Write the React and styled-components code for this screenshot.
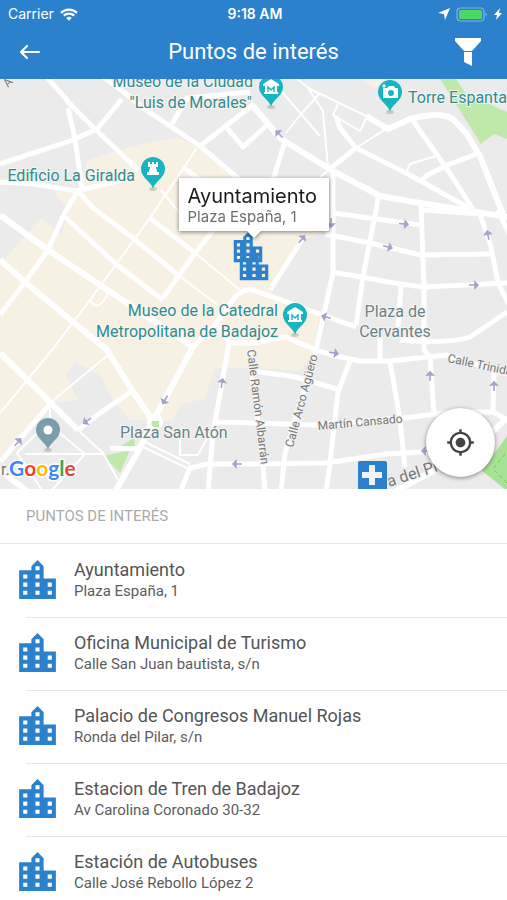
import React from 'react';
import styled, { createGlobalStyle } from 'styled-components';
import { MdLocationCity, MdMyLocation } from 'react-icons/md';

const BLUE = '#2b81cb';

const GlobalStyle = createGlobalStyle`
  * {
    box-sizing: border-box;
  }
  body {
    margin: 0;
    background: #ffffff;
    font-family: Roboto, 'Liberation Sans', sans-serif;
  }
`;

const Screen = styled.div`
  display: flex;
  flex-direction: column;
  height: 100vh;
  overflow: hidden;
`;

const Header = styled.header`
  flex: none;
  background: ${BLUE};
  color: #ffffff;
`;

const StatusBar = styled.div`
  display: grid;
  grid-template-columns: 1fr auto 1fr;
  align-items: center;
  height: 28px;
  padding: 0 5px 0 8px;
  font-family: Inter, sans-serif;
  font-size: 14px;
  line-height: 20px;
`;

const StatusGroup = styled.div`
  display: flex;
  align-items: center;
  justify-content: ${({ $end }) => ($end ? 'flex-end' : 'flex-start')};
  gap: 6px;
`;

const Clock = styled.span`
  font-weight: 600;
`;

const NavBar = styled.div`
  display: grid;
  grid-template-columns: 78px 1fr 78px;
  align-items: center;
  height: 51px;
  padding-bottom: 4px;
`;

const NavTitle = styled.h1`
  margin: 0;
  font-size: 22px;
  line-height: 28px;
  font-weight: 400;
  text-align: center;
`;

const IconButton = styled.button`
  display: flex;
  align-items: center;
  justify-content: center;
  width: ${({ $wide }) => ($wide ? '78px' : '60px')};
  height: 44px;
  padding: 0;
  border: 0;
  background: none;
  color: inherit;
`;

const MapArea = styled.section`
  position: relative;
  flex: none;
`;

const MapCanvas = styled.svg`
  display: block;
  width: 100%;
  height: auto;
`;

const PoiLabel = styled.text`
  font-family: Roboto, sans-serif;
  font-size: 16px;
  fill: ${({ $color }) => $color || '#2f8c90'};
  stroke: #f7f5f0;
  stroke-width: 2px;
  paint-order: stroke;
  text-anchor: ${({ $anchor }) => $anchor || 'start'};
`;

const StreetLabel = styled.text`
  font-family: Roboto, sans-serif;
  font-size: ${({ $large }) => ($large ? '16px' : '12px')};
  fill: #777777;
  stroke: #f1f1f1;
  stroke-width: 2px;
  paint-order: stroke;
`;

const GoogleMark = styled.text`
  font-family: Lato, sans-serif;
  font-size: 21px;
  font-weight: 700;
  stroke: #ffffff;
  stroke-width: 3px;
  paint-order: stroke;
`;

const Callout = styled.div`
  position: absolute;
  left: 50%;
  bottom: 63%;
  width: 150px;
  transform: translateX(-50%);
  padding: 6px 9px;
  background: #ffffff;
  filter: drop-shadow(0 1px 2px rgba(0, 0, 0, 0.5));

  &::after {
    content: '';
    position: absolute;
    top: 100%;
    left: 50%;
    margin-left: -7px;
    border: 7px solid transparent;
    border-top-color: #ffffff;
    border-bottom: 0;
  }
`;

const CalloutTitle = styled.strong`
  display: block;
  font-family: Inter, sans-serif;
  font-size: 20px;
  line-height: 24px;
  font-weight: 400;
  color: #1b1b1b;
`;

const CalloutText = styled.span`
  display: block;
  font-family: Inter, sans-serif;
  font-size: 15px;
  line-height: 17px;
  color: #6f6f6f;
`;

const LocateButton = styled.button`
  position: absolute;
  right: 12px;
  bottom: 12px;
  display: flex;
  align-items: center;
  justify-content: center;
  width: 69px;
  height: 69px;
  padding: 0;
  border: 0;
  border-radius: 50%;
  background: #ffffff;
  color: #444444;
  box-shadow: 0 1px 4px rgba(0, 0, 0, 0.45);
`;

const Panel = styled.section`
  flex: 1;
  min-height: 0;
  overflow-y: auto;
  scrollbar-width: none;
`;

const PanelTitle = styled.h2`
  margin: 0;
  padding: 17px 26px;
  border-bottom: 1px solid #e6e6e6;
  font-size: 15px;
  line-height: 20px;
  font-weight: 400;
  color: #aaaaaa;
`;

const List = styled.ul`
  margin: 0;
  padding: 0;
  list-style: none;
`;

const Row = styled.li`
  display: flex;
  align-items: flex-start;
  height: 73px;
  padding-left: 13px;

  & + & > div {
    border-top-color: #e6e6e6;
  }
`;

const RowIcon = styled(MdLocationCity)`
  flex: none;
  width: 49px;
  height: 49px;
  margin: 12px -36px 0 0;
  color: ${BLUE};
`;

const RowText = styled.div`
  flex: 1;
  padding: 13px 16px 0 48px;
  border-top: 1px solid transparent;
`;

const RowTitle = styled.h3`
  margin: 0;
  font-size: 18px;
  line-height: 24px;
  font-weight: 400;
  color: #555555;
`;

const RowAddress = styled.p`
  margin: 0;
  font-size: 15px;
  line-height: 18px;
  color: #5c5c5c;
`;

const places = [
  { name: 'Ayuntamiento', address: 'Plaza España, 1' },
  { name: 'Oficina Municipal de Turismo', address: 'Calle San Juan bautista, s/n' },
  { name: 'Palacio de Congresos Manuel Rojas', address: 'Ronda del Pilar, s/n' },
  { name: 'Estacion de Tren de Badajoz', address: 'Av Carolina Coronado 30-32' },
  { name: 'Estación de Autobuses', address: 'Calle José Rebollo López 2' },
];

const wideRoads = [
  'M253 106 281 139 333 171 380 196 420 203 471 211 507 217',
  'M366 116 388 129 410 119 Q445 110 455 121 L466 133 480 156 505 220',
  'M0 215 48 250 103 287 133 307 193 347',
  'M0 260 25 282 73 322 107 350 132 390 153 421',
  'M0 353 50 402 78 430',
  'M193 347 152 423 138 452 115 492',
  'M507 418 473 450 390 494',
  'M0 470 28 492',
];

const roads = [
  'M46 76 72 106 95 129 138 170',
  'M0 164 73 140 97 129 122 99',
  'M68 108 75 139 82 188',
  'M0 182 33 184 77 191 130 178',
  'M78 191 65 212 48 250 25 282 0 315',
  'M78 191 93 208 133 238 178 275',
  'M65 217 117 265 163 300',
  'M150 218 195 253',
  'M183 167 200 180',
  'M163 298 195 253 215 228',
  'M102 76 125 93 143 108 200 146 240 180',
  'M172 124 187 98 250 92',
  'M200 146 254 104',
  'M227 128 243 147 266 126',
  'M193 347 215 325 235 297 Q244 288 253 290 L303 308 356 327',
  'M219 325 229 343 254 343 285 337 316 350 336 356 360 361 390 361 446 355 507 374',
  'M229 343 213 433 208 492',
  'M215 422 254 423 316 425 403 418 453 412 493 412 507 420',
  'M180 492 190 468 208 464 254 464 326 463 386 454 440 451',
  'M0 462 50 404',
  'M78 430 100 413 132 391',
  'M110 448 137 449',
  'M336 116 340 128 356 148 406 173 471 209',
  'M356 148 331 168',
  'M413 121 445 166 473 209',
  'M476 154 445 166 426 176 420 183',
  'M285 141 273 180',
  'M333 173 333 273 316 350 285 453 281 492',
  'M378 198 376 210 363 277 356 325',
  'M421 204 424 287 424 350 430 357 434 415',
  'M333 213 420 225',
  'M325 234 370 243 420 255 493 254',
  'M333 272 400 284 424 287 507 283',
  'M423 210 480 214 491 247 498 283 509 305',
  'M498 210 509 234',
  'M401 287 398 327',
  'M507 312 470 337 Q450 344 400 340',
  'M380 338 380 361',
  'M270 290 305 235',
  'M350 361 338 392 330 463 326 492',
  'M390 361 400 420 405 467',
  'M253 371 296 377 340 390',
  'M494 370 493 412',
  'M249 350 263 464 265 492',
];

const lanes = [
  'M178 275 218 305',
  'M78 430 103 453 118 480',
  'M50 403 108 355',
  'M0 413 52 350 90 300 150 218 197 148',
  'M90 300 Q98 314 108 293',
  'M195 253 240 290',
  'M161 190 183 217',
  'M143 447 187 468',
  'M145 442 190 464',
  'M50 403 50 420 17 453 42 490',
  'M50 425 85 454 50 492',
  'M25 454 103 454',
  'M180 430 180 455 198 455',
  'M198 455 210 433',
  'M293 76 310 89 366 116',
  'M386 129 356 148',
  'M406 173 410 164 436 156',
  'M282 92 301 114 320 136',
  'M320 93 301 114 286 133',
  'M308 88 323 111 328 168',
  'M338 104 333 115 360 131 367 117',
  'M253 140 266 126',
  'M331 168 320 177',
];

// [x, y, heading in degrees]
const arrows = [
  [279, 134, 225],
  [331, 223, 90],
  [404, 224, 5],
  [388, 247, 15],
  [302, 239, -50],
  [488, 235, -100],
  [474, 285, 0],
  [326, 317, 195],
  [87, 421, 145],
  [165, 400, 120],
  [222, 383, -82],
  [18, 442, -50],
  [237, 464, 180],
  [334, 353, 10],
  [430, 376, -90],
  [494, 386, -90],
  [426, 451, 180],
];

const Pin = ({ x, y, color = '#17b4c1', children }) => (
  <g transform={`translate(${x} ${y})`}>
    <ellipse cx="0" cy="20" rx="4" ry="2" fill="#000" opacity="0.15" />
    <path d="M0 20C-1 13-12 9-12 0A12 12 0 0 1 12 0C12 9 1 13 0 20Z" fill={color} />
    {children}
  </g>
);

const MuseumGlyph = () => (
  <g>
    <path d="M0-8 8-3V-1H6V5H7V7H-7V5H-6V-1H-8V-3Z" fill="#fff" />
    <path d="M-3 5V0L0 3 3 0V5" fill="none" stroke="#17b4c1" strokeWidth="1.4" />
  </g>
);

const CityMap = () => (
  <MapCanvas viewBox="0 79 507 410" role="img" aria-label="Mapa de Badajoz">
    <rect x="0" y="79" width="507" height="410" fill="#ebebeb" />
    <path
      d="M88 160 120 150 150 142 180 138 200 148 237 178 322 233 303 240 270 292 320 312 314 352 300 371 253 368 215 368 205 398 180 405 172 421 130 420 112 398 100 375 75 362 66 375 78 400 50 403 0 462 0 265 40 218 62 235 68 210 52 190 77 191Z"
      fill="#f7f1e4"
    />
    <path d="M360 79 388 79 374 88Z" fill="#f7f1e4" />
    <path d="M440 79 481 144 494 134 507 139 507 112 466 94 456 79Z" fill="#bfe8ab" />
    <path d="M103 456 130 450 120 473ZM119 447 134 438 135 446Z" fill="#bfe8ab" />
    <path d="M507 436 482 471 505 489 507 489Z" fill="#a6e392" />
    <path d="M505 454 493 469 507 483" fill="none" stroke="#7cc07a" strokeDasharray="4 3" />
    <g fill="none" stroke="#ffffff" strokeLinejoin="round">
      {lanes.map((d) => (
        <path key={d} d={d} strokeWidth="2" />
      ))}
      {roads.map((d) => (
        <path key={d} d={d} strokeWidth="5" />
      ))}
      {wideRoads.map((d) => (
        <path key={d} d={d} strokeWidth="6" />
      ))}
    </g>
    <circle cx="155" cy="422" r="8" fill="#ffffff" />
    <path d="M151 424 152 421 159 421 159 428 153 427Z" fill="#bfe8ab" />
    <g fill="#a3a3ca" stroke="#a3a3ca" strokeWidth="1.6">
      {arrows.map(([x, y, angle]) => (
        <path key={`${x}-${y}`} d="M-5 0H1M1-3 4 0 1 3Z" transform={`translate(${x} ${y}) rotate(${angle})`} />
      ))}
    </g>

    <StreetLabel transform="translate(8 88) rotate(-48)">A</StreetLabel>
    <StreetLabel transform="translate(247 350) rotate(83)">Calle Ramón Albarrán</StreetLabel>
    <StreetLabel transform="translate(293 448) rotate(-75)">Calle Arco Agüero</StreetLabel>
    <StreetLabel transform="translate(318 430) rotate(-5)">Martín Cansado</StreetLabel>
    <StreetLabel transform="translate(447 362) rotate(12)">Calle Trinidad</StreetLabel>
    <StreetLabel $large transform="translate(389 487) rotate(-18)">a del Pilar</StreetLabel>
    <StreetLabel $large x="1" y="475">r.</StreetLabel>

    <PoiLabel x="253" y="87" $anchor="end">Museo de la Ciudad</PoiLabel>
    <PoiLabel x="252" y="108" $anchor="end">"Luis de Morales"</PoiLabel>
    <PoiLabel x="408" y="103">Torre Espanta</PoiLabel>
    <PoiLabel x="135" y="181" $anchor="end">Edificio La Giralda</PoiLabel>
    <PoiLabel x="278" y="316" $anchor="end">Museo de la Catedral</PoiLabel>
    <PoiLabel x="278" y="337" $anchor="end">Metropolitana de Badajoz</PoiLabel>
    <PoiLabel x="395" y="317" $anchor="middle" $color="#68838b">Plaza de</PoiLabel>
    <PoiLabel x="395" y="337" $anchor="middle" $color="#68838b">Cervantes</PoiLabel>
    <PoiLabel x="120" y="438" $color="#68838b">Plaza San Atón</PoiLabel>

    <Pin x={271} y={87}>
      <MuseumGlyph />
    </Pin>
    <Pin x={295} y={315}>
      <MuseumGlyph />
    </Pin>
    <Pin x={390} y={92}>
      <path d="M-7-4H-3L-1-6H4L5-4H8V6H-7Z" fill="#fff" />
      <circle cx="1" cy="1" r="3" fill="#17b4c1" />
      <path d="M-6-8V-4M-8-6H-4" stroke="#fff" strokeWidth="1.2" />
    </Pin>
    <Pin x={153} y={169}>
      <path d="M-5-7H-3V-5H-1V-7H1V-5H3V-7H5V-2H3L4 3H6V6H-6V3H-4L-3-2H-5Z" fill="#fff" />
    </Pin>
    <Pin x={48} y={430} color="#789eae">
      <circle r="4.5" fill="#fff" />
    </Pin>

    <MdLocationCity x="229" y="229" size={38} color={BLUE} />
    <MdLocationCity x="235" y="247" size={38} color={BLUE} />
    <rect x="358" y="461" width="29" height="29" rx="2" fill={BLUE} />
    <path d="M369 465H375V472H382V478H375V485H369V478H362V472H369Z" fill="#f2f2f2" />

    <GoogleMark x="9" y="476">
      <tspan fill="#4285f4">G</tspan>
      <tspan fill="#ea4335">o</tspan>
      <tspan fill="#fbbc05">o</tspan>
      <tspan fill="#4285f4">g</tspan>
      <tspan fill="#34a853">l</tspan>
      <tspan fill="#ea4335">e</tspan>
    </GoogleMark>
  </MapCanvas>
);

const WifiIcon = () => (
  <svg width="18" height="13" viewBox="0 0 18 13" fill="none" stroke="#fff" strokeWidth="2.3">
    <path d="M1 4.8A11.5 11.5 0 0 1 17 4.8M3.8 7.7A7.5 7.5 0 0 1 14.2 7.7" />
    <path d="M6.2 10A4 4 0 0 1 11.8 10L9 12.8Z" fill="#fff" stroke="none" />
  </svg>
);

const LocationArrow = () => (
  <svg width="12" height="12" viewBox="0 0 12 12" fill="#fff">
    <path d="M12 0 7 12 6 6 0 5Z" />
  </svg>
);

const Battery = () => (
  <svg width="32" height="15" viewBox="0 0 32 15">
    <rect x="1" y="1" width="27" height="13" rx="3.5" fill="none" stroke="#83b5e2" strokeWidth="1.2" />
    <rect x="3" y="3" width="23" height="9" rx="1.5" fill="#4bd863" />
    <path d="M29.5 5.5Q32 7.5 29.5 9.5Z" fill="#83b5e2" />
  </svg>
);

const Bolt = () => (
  <svg width="8" height="12" viewBox="0 0 8 12" fill="#fff">
    <path d="M6 0 0 7H3L2 12 8 5H5Z" />
  </svg>
);

const BackIcon = () => (
  <svg width="22" height="16" viewBox="0 0 22 16" fill="none" stroke="#fff" strokeWidth="2.2" strokeLinecap="round" strokeLinejoin="round">
    <path d="M8 2 2 8 8 14M2 8H20" />
  </svg>
);

const FunnelIcon = () => (
  <svg width="26" height="28" viewBox="0 0 26 28" fill="#fff">
    <path d="M0 0H26V3L17 13H9L0 3Z" />
    <path d="M9 14H17V28L9 24Z" />
  </svg>
);

const App = () => {
  return (
    <Screen>
      <GlobalStyle />
      <Header>
        <StatusBar>
          <StatusGroup>
            <span>Carrier</span>
            <WifiIcon />
          </StatusGroup>
          <Clock>9:18 AM</Clock>
          <StatusGroup $end>
            <LocationArrow />
            <Battery />
            <Bolt />
          </StatusGroup>
        </StatusBar>
        <NavBar>
          <IconButton type="button" aria-label="Volver">
            <BackIcon />
          </IconButton>
          <NavTitle>Puntos de interés</NavTitle>
          <IconButton type="button" aria-label="Filtrar" $wide>
            <FunnelIcon />
          </IconButton>
        </NavBar>
      </Header>

      <MapArea>
        <CityMap />
        <Callout>
          <CalloutTitle>Ayuntamiento</CalloutTitle>
          <CalloutText>Plaza España, 1</CalloutText>
        </Callout>
        <LocateButton type="button" aria-label="Mi ubicación">
          <MdMyLocation size={29} />
        </LocateButton>
      </MapArea>

      <Panel>
        <PanelTitle>PUNTOS DE INTERÉS</PanelTitle>
        <List>
          {places.map((place) => (
            <Row key={place.name}>
              <RowIcon />
              <RowText>
                <RowTitle>{place.name}</RowTitle>
                <RowAddress>{place.address}</RowAddress>
              </RowText>
            </Row>
          ))}
        </List>
      </Panel>
    </Screen>
  );
};

export default App;
